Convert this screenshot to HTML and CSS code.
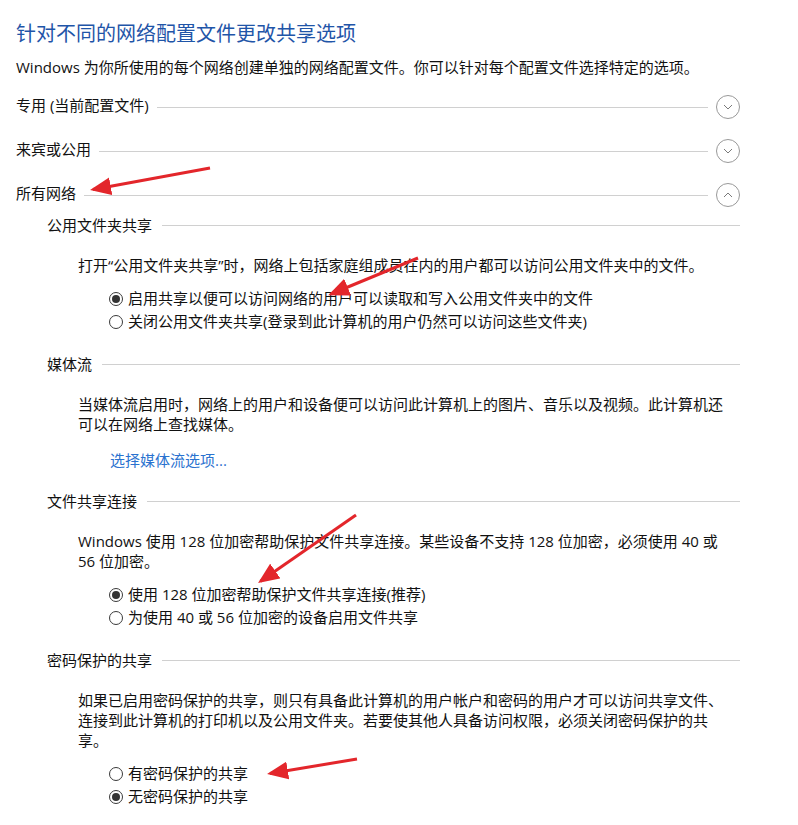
FILE: index.html
```html
<!DOCTYPE html>
<html lang="zh-CN">
<head>
<meta charset="utf-8">
<title>高级共享设置</title>
<link rel="stylesheet" href="styles.css">
</head>
<body>
<div class="page">
  <h1 class="title">针对不同的网络配置文件更改共享选项</h1>
  <p class="intro">Windows 为你所使用的每个网络创建单独的网络配置文件。你可以针对每个配置文件选择特定的选项。</p>

  <div class="profile">
    <span class="profile-name">专用 (当前配置文件)</span>
    <span class="rule"></span>
    <svg class="toggle" width="24" height="24" viewBox="0 0 24 24"><circle cx="12" cy="12" r="11.5"/><polyline points="8,10 12,14 16,10"/></svg>
  </div>
  <div class="profile">
    <span class="profile-name">来宾或公用</span>
    <span class="rule"></span>
    <svg class="toggle" width="24" height="24" viewBox="0 0 24 24"><circle cx="12" cy="12" r="11.5"/><polyline points="8,10 12,14 16,10"/></svg>
  </div>
  <div class="profile">
    <span class="profile-name">所有网络</span>
    <span class="rule"></span>
    <svg class="toggle" width="24" height="24" viewBox="0 0 24 24"><circle cx="12" cy="12" r="11.5"/><polyline points="8,14 12,10 16,14"/></svg>
  </div>

  <div class="details">
    <section class="section first">
      <div class="section-head"><span>公用文件夹共享</span><span class="rule"></span></div>
      <p class="para">打开“公用文件夹共享”时，网络上包括家庭组成员在内的用户都可以访问公用文件夹中的文件。</p>
      <div class="radios">
        <label class="radio"><span class="dot checked"></span>启用共享以便可以访问网络的用户可以读取和写入公用文件夹中的文件</label>
        <label class="radio"><span class="dot"></span>关闭公用文件夹共享(登录到此计算机的用户仍然可以访问这些文件夹)</label>
      </div>
    </section>

    <section class="section">
      <div class="section-head"><span>媒体流</span><span class="rule"></span></div>
      <p class="para">当媒体流启用时，网络上的用户和设备便可以访问此计算机上的图片、音乐以及视频。此计算机还可以在网络上查找媒体。</p>
      <a class="link" href="#">选择媒体流选项...</a>
    </section>

    <section class="section">
      <div class="section-head"><span>文件共享连接</span><span class="rule"></span></div>
      <p class="para">Windows 使用 128 位加密帮助保护文件共享连接。某些设备不支持 128 位加密，必须使用 40 或 56 位加密。</p>
      <div class="radios">
        <label class="radio"><span class="dot checked"></span>使用 128 位加密帮助保护文件共享连接(推荐)</label>
        <label class="radio"><span class="dot"></span>为使用 40 或 56 位加密的设备启用文件共享</label>
      </div>
    </section>

    <section class="section">
      <div class="section-head"><span>密码保护的共享</span><span class="rule"></span></div>
      <p class="para">如果已启用密码保护的共享，则只有具备此计算机的用户帐户和密码的用户才可以访问共享文件、连接到此计算机的打印机以及公用文件夹。若要使其他人具备访问权限，必须关闭密码保护的共享。</p>
      <div class="radios">
        <label class="radio"><span class="dot"></span>有密码保护的共享</label>
        <label class="radio"><span class="dot checked"></span>无密码保护的共享</label>
      </div>
    </section>
  </div>

  <svg class="arrows" width="798" height="825" viewBox="0 0 798 825">
    <defs>
      <marker id="head" markerWidth="7" markerHeight="6" refX="6" refY="3" orient="auto" markerUnits="strokeWidth">
        <polygon points="0,0 7,3 0,6" class="head"/>
      </marker>
    </defs>
    <line x1="210" y1="168" x2="93" y2="189.5" marker-end="url(#head)"/>
    <line x1="418" y1="258" x2="331" y2="294" marker-end="url(#head)"/>
    <line x1="356" y1="515" x2="260.5" y2="581.3" marker-end="url(#head)"/>
    <line x1="357" y1="759" x2="270" y2="773.5" marker-end="url(#head)"/>
  </svg>
</div>
</body>
</html>
```
FILE: styles.css
```css
html, body {
  margin: 0;
  padding: 0;
  background: #ffffff;
}

body {
  font-family: "Open Sans", "Noto Sans CJK SC", sans-serif;
  font-size: 15px;
  color: #111111;
}

.page {
  position: relative;
  width: 798px;
  min-height: 825px;
  padding: 20px 0 0 16px;
  box-sizing: border-box;
}

.title {
  margin: 0;
  font-size: 20px;
  line-height: 28px;
  font-weight: normal;
  color: #1f55a8;
}

.intro {
  margin: 9px 0 0;
  line-height: 20px;
}

.profile {
  display: flex;
  align-items: center;
  width: 724px;
  height: 24px;
  margin-top: 20px;
}

.intro + .profile {
  margin-top: 18px;
}

.profile-name {
  line-height: 24px;
  padding-bottom: 5px;
}

.rule {
  flex: 1;
  height: 1px;
  background: #d0d0d0;
  margin: 0 8px 0 8px;
}

.toggle {
  flex: none;
  fill: none;
  stroke: #999999;
  stroke-width: 1;
}

.toggle polyline {
  stroke: #7a7a7a;
}

.details {
  width: 693px;
  margin-left: 31px;
}

.section {
  margin-top: 19px;
}

.section.first {
  margin-top: 6px;
}

.section-head {
  display: flex;
  align-items: center;
  line-height: 24px;
}

.section-head .rule {
  margin: 0 0 0 10px;
}

.para {
  margin: 18px 0 0 31px;
  width: 648px;
  line-height: 20px;
}

.radios {
  display: flex;
  flex-direction: column;
  margin: 12px 0 0 62px;
}

.radio {
  display: flex;
  align-items: center;
  height: 23px;
  line-height: 23px;
}

.dot {
  width: 14px;
  height: 14px;
  border: 1px solid #3a3a3a;
  border-radius: 50%;
  box-sizing: border-box;
  margin-right: 5px;
  display: flex;
  align-items: center;
  justify-content: center;
}

.dot.checked::after {
  content: "";
  width: 8px;
  height: 8px;
  border-radius: 50%;
  background: #333333;
}

.link {
  display: block;
  margin: 16px 0 0 63px;
  line-height: 20px;
  color: #2a72cf;
  text-decoration: none;
}

.arrows {
  position: absolute;
  left: 0;
  top: 0;
  pointer-events: none;
}

.arrows line {
  stroke: #e3262b;
  stroke-width: 3;
}

.arrows .head {
  fill: #e3262b;
}
```
